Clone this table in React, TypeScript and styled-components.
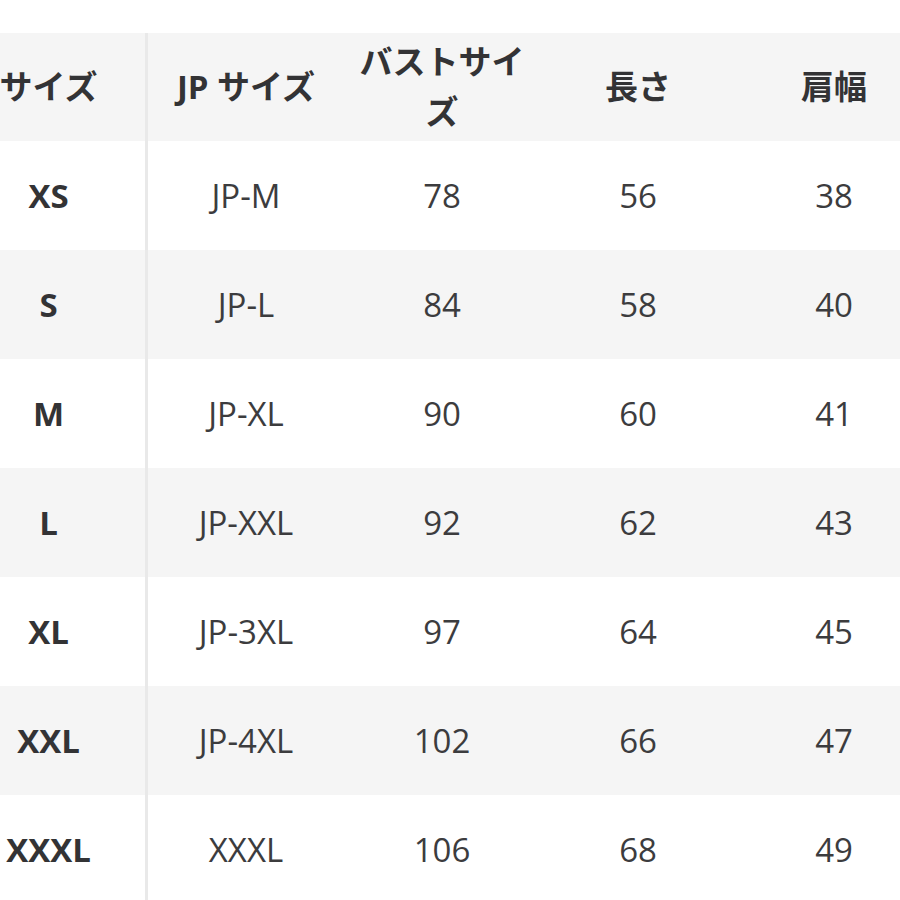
import React from "react";
import styled, { createGlobalStyle } from "styled-components";

const Global = createGlobalStyle`
  html, body { margin: 0; padding: 0; background: #ffffff; overflow: hidden; }
  body { font-family: "Open Sans", "Noto Sans CJK JP", sans-serif; color: #3a3a3c; }
`;

const Page = styled.div`
  width: 900px;
  height: 900px;
  overflow: hidden;
  padding-top: 33px;
  box-sizing: border-box;
`;

const Table = styled.div`
  margin-left: -48px;
  width: 980px;
  display: flex;
  flex-direction: column;
`;

const Row = styled.div<{ $shade: boolean; $h: number }>`
  display: grid;
  grid-template-columns: repeat(5, 196px);
  height: ${(p) => p.$h}px;
  background: ${(p) => (p.$shade ? "#f5f5f5" : "#ffffff")};
`;

const Cell = styled.div<{ $first?: boolean; $bold?: boolean; $head?: boolean }>`
  display: flex;
  align-items: center;
  justify-content: center;
  text-align: center;
  box-sizing: border-box;
  padding: 0 12px;
  font-size: 33px;
  line-height: 50px;
  font-weight: ${(p) => (p.$bold ? 700 : 400)};
  color: ${(p) => (p.$bold ? "#333335" : "#3c3c3e")};
  border-right: ${(p) => (p.$first ? "3px solid #e9e9e9" : "none")};
  word-break: break-all;
`;

const header = ["サイズ", "JP サイズ", "バストサイズ", "長さ", "肩幅"];
const rows = [
  ["XS", "JP-M", "78", "56", "38"],
  ["S", "JP-L", "84", "58", "40"],
  ["M", "JP-XL", "90", "60", "41"],
  ["L", "JP-XXL", "92", "62", "43"],
  ["XL", "JP-3XL", "97", "64", "45"],
  ["XXL", "JP-4XL", "102", "66", "47"],
  ["XXXL", "XXXL", "106", "68", "49"],
];

export default function App() {
  return (
    <Page>
      <Global />
      <Table>
        <Row $shade $h={108}>
          {header.map((h, i) => (
            <Cell key={i} $first={i === 0} $bold $head>
              {h}
            </Cell>
          ))}
        </Row>
        {rows.map((r, ri) => (
          <Row key={ri} $shade={ri % 2 === 1} $h={109}>
            {r.map((c, ci) => (
              <Cell key={ci} $first={ci === 0} $bold={ci === 0}>
                {c}
              </Cell>
            ))}
          </Row>
        ))}
      </Table>
    </Page>
  );
}
